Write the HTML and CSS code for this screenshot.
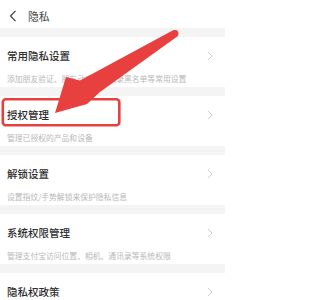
FILE: index.html
```html
<!DOCTYPE html>
<html>
<head>
<meta charset="utf-8">
<link rel="stylesheet" href="styles.css">
</head>
<body>
<div class="page">
  <header class="header">
    <svg class="back" width="8" height="12" viewBox="0 0 8 12"><path d="M6.5 0.8 L1.5 6 L6.5 11.2" fill="none" stroke="#333" stroke-width="1.1"/></svg>
    <span class="header-title">隐私</span>
  </header>
  <div class="band"></div>
  <section class="item">
    <div class="item-row"><span class="item-title">常用隐私设置</span><svg class="chev" width="6" height="10" viewBox="0 0 6 10"><path d="M0.8 0.8 L5 5 L0.8 9.2" fill="none" stroke="#c8c8c8" stroke-width="0.9"/></svg></div>
    <div class="item-sub">添加朋友验证、朋友动态、通讯录黑名单等常用设置</div>
  </section>
  <div class="band"></div>
  <section class="item">
    <div class="item-row"><span class="item-title">授权管理</span><svg class="chev" width="6" height="10" viewBox="0 0 6 10"><path d="M0.8 0.8 L5 5 L0.8 9.2" fill="none" stroke="#c8c8c8" stroke-width="0.9"/></svg></div>
    <div class="item-sub">管理已授权的产品和设备</div>
  </section>
  <div class="band"></div>
  <section class="item">
    <div class="item-row"><span class="item-title">解锁设置</span><svg class="chev" width="6" height="10" viewBox="0 0 6 10"><path d="M0.8 0.8 L5 5 L0.8 9.2" fill="none" stroke="#c8c8c8" stroke-width="0.9"/></svg></div>
    <div class="item-sub">设置指纹/手势解锁来保护隐私信息</div>
  </section>
  <div class="band"></div>
  <section class="item">
    <div class="item-row"><span class="item-title">系统权限管理</span><svg class="chev" width="6" height="10" viewBox="0 0 6 10"><path d="M0.8 0.8 L5 5 L0.8 9.2" fill="none" stroke="#c8c8c8" stroke-width="0.9"/></svg></div>
    <div class="item-sub">管理支付宝访问位置、相机、通讯录等系统权限</div>
  </section>
  <div class="band"></div>
  <section class="item">
    <div class="item-row"><span class="item-title">隐私权政策</span><svg class="chev" width="6" height="10" viewBox="0 0 6 10"><path d="M0.8 0.8 L5 5 L0.8 9.2" fill="none" stroke="#c8c8c8" stroke-width="0.9"/></svg></div>
  </section>

  <svg class="annot" width="225" height="300" viewBox="0 0 225 300">
    <rect x="2.8" y="99.2" width="116.5" height="26" rx="3" ry="3" fill="none" stroke="#e8403f" stroke-width="2.6"/>
    <path d="M172.6 30.4 L80 80.5 L66 77 L55 113 L87 104 L100 92 L177.6 36.2 Q180 32 175 30 Z" fill="#e8403f"/>
    <circle cx="175.2" cy="33.2" r="3.1" fill="#e8403f"/>
  </svg>
</div>
</body>
</html>
```

FILE: styles.css
```css
* { box-sizing: border-box; }
html, body { margin: 0; padding: 0; background: #ffffff; }
body {
  font-family: "Noto Sans CJK SC", "Noto Sans", sans-serif;
  width: 225px;
  height: 300px;
  overflow: hidden;
}
.page {
  position: relative;
  width: 225px;
  height: 300px;
  overflow: hidden;
}
.header {
  height: 28px;
  display: flex;
  align-items: center;
  padding-left: 9px;
  gap: 11px;
}
.back { display: block; margin-top: 4px; }
.header-title {
  font-size: 10.8px;
  color: #444;
  line-height: 1;
  margin-top: 4px;
}
.band {
  height: 9px;
  background: #f4f4f4;
}
.item {
  height: 50px;
  padding: 0 12px 0 7px;
}
.item-row {
  height: 38px;
  display: flex;
  align-items: center;
  justify-content: space-between;
}
.item-title {
  font-size: 10.5px;
  color: #2e2e2e;
  font-weight: 500;
  line-height: 1;
}
.chev { display: block; }
.item-sub {
  font-size: 7.8px;
  line-height: 8px;
  color: #b8b8b8;
  white-space: nowrap;
}
.annot {
  position: absolute;
  left: 0;
  top: 0;
  pointer-events: none;
}
```
